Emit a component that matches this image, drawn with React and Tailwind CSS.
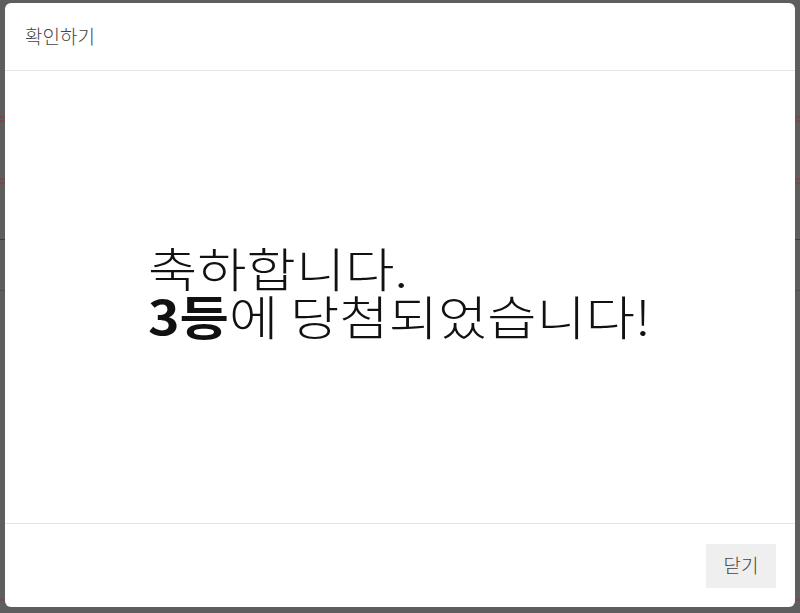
import React from "react";

const font = { fontFamily: '"Noto Sans CJK KR", "Noto Sans", sans-serif' };

export default function App() {
  return (
    <div
      className="relative w-[800px] h-[613px] overflow-hidden bg-[#5e5e5e]"
      style={font}
    >
      {/* dimmed page behind the overlay */}
      <div className="absolute inset-0 flex flex-col">
        <div className="h-[116px]" />
        <div className="h-[2px] bg-[#7a4a4a]" />
        <div className="h-[2px]" />
        <div className="h-[2px] bg-[#7a4a4a]" />
        <div className="h-[56px]" />
        <div className="h-[2px] bg-[#7a4a4a]" />
        <div className="h-[2px]" />
        <div className="h-[2px] bg-[#7a4a4a]" />
        <div className="h-[55px]" />
        <div className="h-[1px] bg-[#3c3c3c]" />
        <div className="h-[50px]" />
        <div className="h-[1px] bg-[#505050]" />
        <div className="flex-1" />
        <div className="h-[2px] bg-[#7a4a4a]" />
        <div className="h-[12px]" />
      </div>

      {/* modal */}
      <div className="absolute left-[5px] top-[3px] w-[790px] h-[604px] bg-white rounded-[6px] flex flex-col overflow-hidden">
        <div className="h-[68px] shrink-0 border-b border-[#e5e5e5] flex items-center pl-[20px] text-[19px] font-light text-[#444]">
          확인하기
        </div>
        <div className="flex-1 pl-[143px] pt-[172px]">
          <div className="origin-left scale-x-[1.14] text-[47px] leading-[48px] font-light text-[#111]">
            <div>축하합니다.</div>
            <div>
              <span className="font-bold">3등</span>에 당첨되었습니다!
            </div>
          </div>
        </div>
        <div className="h-[84px] shrink-0 border-t border-[#e5e5e5] flex items-center justify-end pr-[19px]">
          <button className="w-[70px] h-[44px] bg-[#efefef] text-[19px] font-light text-[#444] flex items-center justify-center">
            닫기
          </button>
        </div>
      </div>
    </div>
  );
}
